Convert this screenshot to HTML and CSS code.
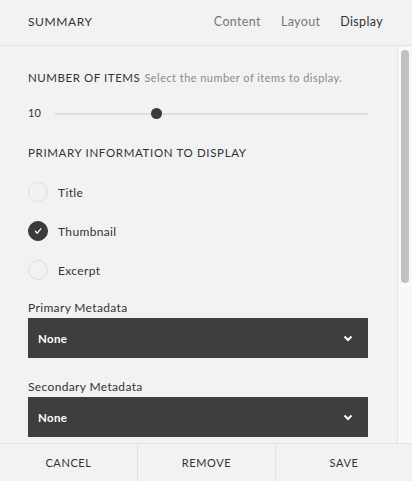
FILE: index.html
```html
<!DOCTYPE html>
<html>
<head>
<meta charset="utf-8">
<link rel="stylesheet" href="styles.css">
</head>
<body>
<div class="panel">
  <div class="header">
    <div class="title">SUMMARY</div>
    <nav class="tabs">
      <span class="tab">Content</span>
      <span class="tab">Layout</span>
      <span class="tab active">Display</span>
    </nav>
  </div>
  <div class="main">
    <div class="content">
      <div class="field-head"><span class="caps">NUMBER OF ITEMS</span> <span class="hint">Select the number of items to display.</span></div>
      <div class="slider-row">
        <span class="value">10</span>
        <div class="track"><div class="knob"></div></div>
      </div>
      <div class="section caps">PRIMARY INFORMATION TO DISPLAY</div>
      <div class="radios">
        <div class="radio"><span class="circle"></span><span class="label">Title</span></div>
        <div class="radio"><span class="circle checked"><svg width="10" height="10" viewBox="0 0 10 10"><path d="M2.4 5.3 L4.3 7.2 L7.8 2.8" fill="none" stroke="#fff" stroke-width="1.3" stroke-linecap="round" stroke-linejoin="round"/></svg></span><span class="label">Thumbnail</span></div>
        <div class="radio"><span class="circle"></span><span class="label">Excerpt</span></div>
      </div>
      <div class="meta-label first">Primary Metadata</div>
      <div class="select"><span>None</span><svg width="10" height="7" viewBox="0 0 10 7"><path d="M1.5 1.5 L5 5 L8.5 1.5" fill="none" stroke="#fff" stroke-width="2"/></svg></div>
      <div class="meta-label">Secondary Metadata</div>
      <div class="select"><span>None</span><svg width="10" height="7" viewBox="0 0 10 7"><path d="M1.5 1.5 L5 5 L8.5 1.5" fill="none" stroke="#fff" stroke-width="2"/></svg></div>
    </div>
    <div class="scrollbar"><div class="thumb"></div></div>
  </div>
  <div class="footer">
    <div class="btn">CANCEL</div>
    <div class="btn">REMOVE</div>
    <div class="btn">SAVE</div>
  </div>
</div>
</body>
</html>
```

FILE: styles.css
```css
* { box-sizing: border-box; }
html, body { margin: 0; padding: 0; }
body {
  background: #f2f2f2;
  font-family: Lato, "Liberation Sans", sans-serif;
  color: #333;
  width: 412px;
  height: 481px;
  overflow: hidden;
}
.panel {
  display: flex;
  flex-direction: column;
  height: 481px;
}
.header {
  height: 46px;
  flex: none;
  border-bottom: 1px solid #e2e2e2;
  display: flex;
  align-items: center;
  justify-content: space-between;
  padding: 0 29px 2px 28px;
}
.title {
  font-size: 12px;
  letter-spacing: 0.6px;
  color: #333;
}
.tabs { display: flex; gap: 20px; }
.tab { font-size: 12.5px; color: #777; letter-spacing: 0.35px; }
.tab.active { color: #333; }
.main {
  flex: 1;
  display: flex;
  min-height: 0;
}
.content {
  flex: 1;
  overflow: hidden;
  padding: 20px 29px 0 28px;
}
.field-head {
  height: 20px;
  line-height: 20px;
  white-space: nowrap;
}
.caps {
  font-size: 11.5px;
  letter-spacing: 0.65px;
  color: #333;
}
.field-head .caps { letter-spacing: 0.55px; }
.hint {
  font-size: 11px;
  color: #8a8a8a;
  letter-spacing: 0.45px;
}
.slider-row {
  margin-top: 18px;
  height: 20px;
  display: flex;
  align-items: center;
}
.value { font-size: 11px; width: 27px; color: #333; line-height: 18px; margin-top: -2px; }
.track {
  flex: 1;
  height: 2px;
  background: #dcdcdc;
  position: relative;
}
.knob {
  position: absolute;
  left: 96px;
  top: -5px;
  width: 11px;
  height: 11px;
  border-radius: 50%;
  background: #3a3a3a;
}
.section {
  margin-top: 19px;
  height: 20px;
  line-height: 20px;
}
.radios {
  margin-top: 19px;
  display: flex;
  flex-direction: column;
  gap: 19px;
}
.radio {
  height: 20px;
  display: flex;
  align-items: center;
  gap: 10px;
}
.circle {
  width: 20px;
  height: 20px;
  border-radius: 50%;
  border: 1px solid #dedede;
  display: flex;
  align-items: center;
  justify-content: center;
}
.circle.checked { background: #3a3a3a; border-color: #3a3a3a; }
.label { font-size: 12px; color: #333; letter-spacing: 0.35px; }
.meta-label {
  margin-top: 21px;
  height: 16px;
  line-height: 16px;
  font-size: 12px;
  color: #333;
  letter-spacing: 0.35px;
}
.meta-label.first { margin-top: 20px; }
.select {
  margin-top: 2px;
  height: 40px;
  background: #3e3e3e;
  display: flex;
  align-items: center;
  justify-content: space-between;
  padding: 0 15px 0 10px;
  color: #fff;
  font-size: 11.5px;
  font-weight: bold;
  letter-spacing: 0.3px;
}
.scrollbar {
  width: 15px;
  flex: none;
  border-left: 1px solid #e4e4e4;
  background: #f8f8f8;
  padding: 4px 0 0 3px;
}
.thumb {
  width: 8px;
  height: 233px;
  border-radius: 4px;
  background: #c1c1c1;
}
.footer {
  height: 38px;
  flex: none;
  border-top: 1px solid #e2e2e2;
  display: grid;
  grid-template-columns: 137px 138px 1fr;
}
.btn {
  display: flex;
  align-items: center;
  justify-content: center;
  font-size: 11px;
  letter-spacing: 0.6px;
  color: #333;
  border-left: 1px solid #e2e2e2;
}
.btn:first-child { border-left: none; }
```
